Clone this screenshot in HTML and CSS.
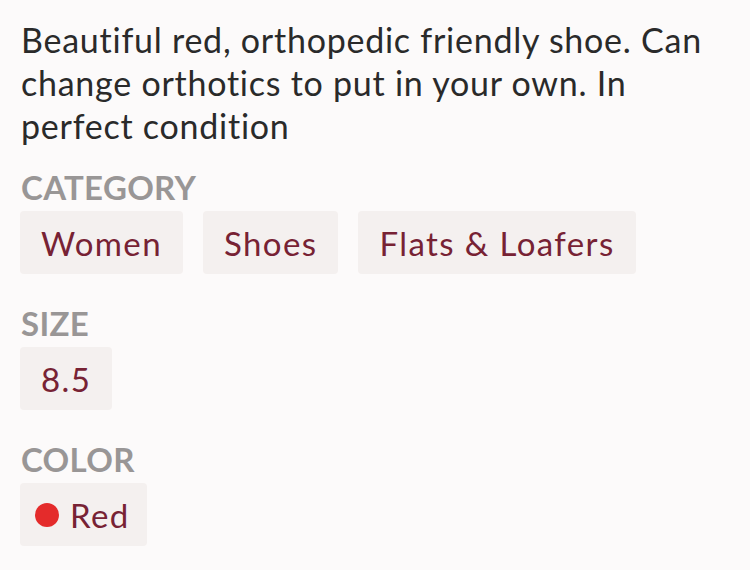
FILE: index.html
```html
<!DOCTYPE html>
<html>
<head>
<meta charset="utf-8">
<link rel="stylesheet" href="styles.css">
</head>
<body>
<div class="page">
  <p class="desc">Beautiful red, orthopedic friendly shoe. Can change orthotics to put in your own. In perfect condition</p>
  <section class="group">
    <h3 class="label">CATEGORY</h3>
    <div class="chips">
      <span class="chip">Women</span>
      <span class="chip">Shoes</span>
      <span class="chip">Flats &amp; Loafers</span>
    </div>
  </section>
  <section class="group">
    <h3 class="label">SIZE</h3>
    <div class="chips">
      <span class="chip">8.5</span>
    </div>
  </section>
  <section class="group">
    <h3 class="label">COLOR</h3>
    <div class="chips">
      <span class="chip chip-color"><span class="dot"></span>Red</span>
    </div>
  </section>
</div>
</body>
</html>
```
FILE: styles.css
```css
html, body {
  margin: 0;
  padding: 0;
  background: #fcfafa;
}
.page {
  font-family: Lato, "Noto Sans", sans-serif;
  padding: 18px 0 0 21px;
  width: 715px;
}
.desc {
  margin: 0;
  font-size: 34px;
  line-height: 43px;
  letter-spacing: 0.75px;
  color: #2a2a2a;
}
.group {
  margin-top: 23px;
}
.group + .group {
  margin-top: 32px;
}
.label {
  margin: 0 0 7px 0;
  font-size: 33px;
  line-height: 34px;
  font-weight: 700;
  letter-spacing: 0.3px;
  color: #999696;
}
.chips {
  display: flex;
  gap: 20px;
  margin-left: -1px;
}
.chip {
  display: flex;
  align-items: center;
  height: 63px;
  padding: 0 21px;
  background: #f4f0ef;
  border-radius: 4px;
  font-size: 33px;
  letter-spacing: 1.4px;
  color: #772234;
}
.chip-color {
  padding: 0 17px 0 15px;
}
.dot {
  width: 24px;
  height: 24px;
  border-radius: 50%;
  background: #e42b2b;
  margin-right: 11px;
}
```
